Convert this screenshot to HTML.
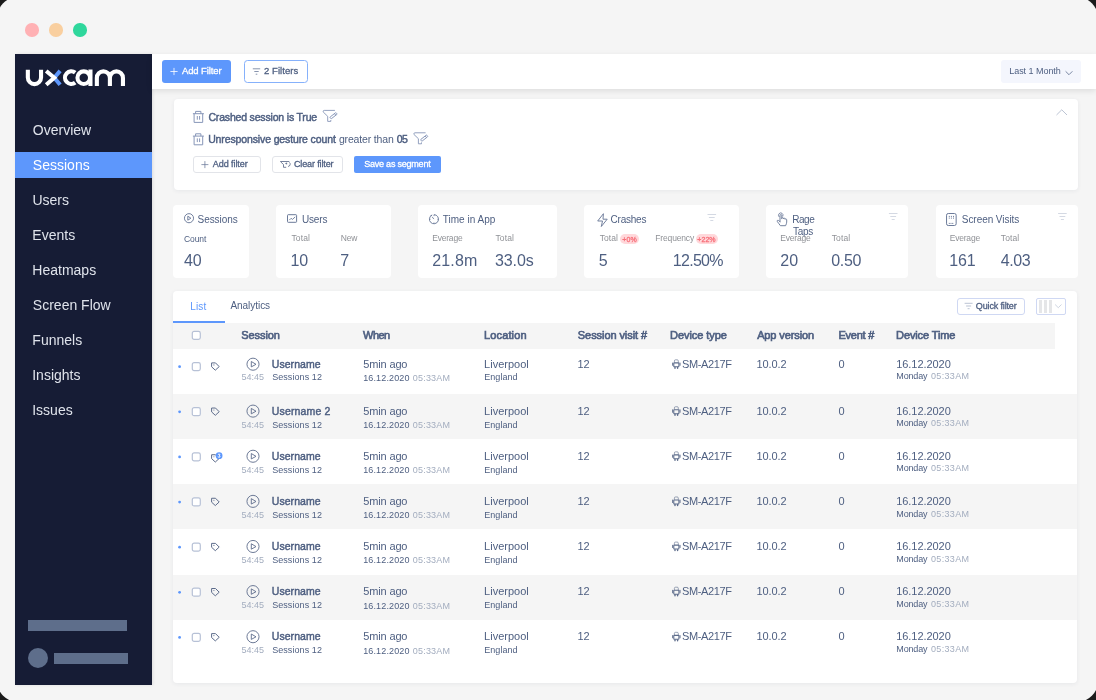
<!DOCTYPE html>
<html><head><meta charset="utf-8"><title>UXCam Sessions</title>
<style>
html,body{margin:0;padding:0;overflow:hidden}
.root{position:absolute;left:0;top:0;width:1096px;height:700px;overflow:hidden;background:#1b1b1b}
body{width:1096px;height:700px;overflow:hidden;background:#1b1b1b;font-family:"Liberation Sans",sans-serif;position:relative}
.win{position:absolute;left:-3px;top:-3px;width:1100.5px;height:704.6px;background:#f5f5f5;border-radius:21px}
.pg{position:absolute;left:0;top:0;width:1096px;height:700px}
.b{position:absolute;display:block}
.tl{position:absolute;left:0;top:0;width:1096px;height:700px;will-change:transform}
.t{position:absolute;white-space:nowrap;line-height:1}
</style></head><body>
<div class="root">
<div class="win"></div>
<div class="pg">
<div class="b" style="left:25.25px;top:23.25px;width:13.5px;height:13.5px;border-radius:50%;background:#ffb1b4"></div>
<div class="b" style="left:49.25px;top:23.25px;width:13.5px;height:13.5px;border-radius:50%;background:#f9cf9f"></div>
<div class="b" style="left:73.25px;top:23.25px;width:13.5px;height:13.5px;border-radius:50%;background:#2fd79c"></div>
<div class="b" style="left:15px;top:54px;width:137px;height:631px;background:#161c35;box-shadow:1px 0 3px rgba(0,0,0,.10)"></div>
<svg class="b" style="left:20px;top:60px;" width="116" height="36" viewBox="0 0 116 36" fill="none"><g transform="translate(-20.000 -60.000)">
<path d="M60.1 70.9L54.3 77.8L60.1 84.8" stroke="#5d97fc" stroke-width="4"/>
<g stroke="#fff" stroke-width="4.1" fill="none">
<path d="M27.85 69.7V77.5a6.6 6.6 0 0 0 13.2 0V69.7"/>
<path d="M46.2 70.9L54.3 77.8L46.2 84.8" stroke-width="4" stroke-linejoin="miter"/>
<path d="M75.2 72.7A6.3 6.3 0 1 0 75.2 82.6"/>
<circle cx="83.75" cy="77.65" r="6.3"/>
<path d="M90.45 69.5V86"/>
<path d="M96.85 86V77.9a6.525 6.525 0 0 1 13.05 0V86M109.9 77.9a6.525 6.525 0 0 1 13.05 0V86"/>
</g>
</g></svg>
<div class="b" style="left:15px;top:152px;width:137px;height:26px;background:#5d97fc"></div>
<div class="b" style="left:28px;top:620px;width:99px;height:10.5px;background:#5e6e8b"></div>
<div class="b" style="left:28px;top:648px;width:20px;height:20px;background:#5e6e8b;border-radius:50%"></div>
<div class="b" style="left:54px;top:652.5px;width:74px;height:11px;background:#5e6e8b"></div>
<div class="b" style="left:152px;top:54px;width:944px;height:35px;background:#fff;box-shadow:0 2px 6px rgba(0,0,0,.10)"></div>
<div class="b" style="left:162px;top:60px;width:69px;height:23px;background:#5d97fc;border-radius:3px"></div>
<svg class="b" style="left:170px;top:67px;" width="9" height="10" viewBox="0 0 9 10" fill="none"><g transform="translate(0.200 0.700)"><path d="M3.8 .2V7.4M.2 3.8H7.4" stroke="#fff" stroke-width=".8"/></g></svg>
<div class="b" style="left:244px;top:60px;width:64px;height:23px;background:#fff;border:1px solid #86b1fb;border-radius:3.5px;box-sizing:border-box"></div>
<svg class="b" style="left:252px;top:68px;" width="10" height="8" viewBox="0 0 10 8" fill="none"><g transform="translate(0.500 0.000)"><path d="M.3 .8H7.7M1.8 3.5H6.2M3.2 6.2H4.8" stroke="#6b7a99" stroke-width=".8"/></g></svg>
<div class="b" style="left:1001px;top:60px;width:80px;height:23px;background:#f4f6fd;border-radius:3px"></div>
<svg class="b" style="left:1065px;top:70px;" width="9" height="7" viewBox="0 0 9 7" fill="none"><g transform="translate(0.000 0.500)"><path d="M.6 .8L4 4.2L7.4 .8" stroke="#6b7a99" stroke-width=".9"/></g></svg>
<div class="b" style="left:174px;top:99px;width:904px;height:91px;background:#fff;border-radius:4px;box-shadow:0 1px 4px rgba(40,50,80,.07)"></div>
<svg class="b" style="left:192px;top:110px;" width="14" height="14" viewBox="0 0 14 14" fill="none"><g transform="translate(0.400 0.800)"><g stroke="#8796b8" stroke-width="1" fill="none"><path d="M.5 2.9H11.5M3.2 2.9V.6H8.5V2.9M1.7 2.9V11.6H10.3V2.9M4.9 5.2V8.9M7.2 5.2V8.9"/></g></g></svg>
<svg class="b" style="left:322px;top:109px;" width="17" height="15" viewBox="0 0 17 15" fill="none"><g transform="translate(0.000 0.000)"><g stroke="#8796b8" stroke-width=".9" fill="none"><path d="M12.9 1.4H2.2Q1.2 1.4 1.2 2.4V3L5.7 7.3V12.4H8.8V11"/><g transform="translate(11.5 6.7) rotate(-38)"><rect x="-3.9" y="-1.05" width="7.8" height="2.1" rx=".6"/><path d="M2.1 -1V1"/></g></g></g></svg>
<svg class="b" style="left:192px;top:133px;" width="14" height="14" viewBox="0 0 14 14" fill="none"><g transform="translate(0.400 0.200)"><g stroke="#8796b8" stroke-width="1" fill="none"><path d="M.5 2.9H11.5M3.2 2.9V.6H8.5V2.9M1.7 2.9V11.6H10.3V2.9M4.9 5.2V8.9M7.2 5.2V8.9"/></g></g></svg>
<svg class="b" style="left:412px;top:131px;" width="18" height="16" viewBox="0 0 18 16" fill="none"><g transform="translate(0.700 0.400)"><g stroke="#8796b8" stroke-width=".9" fill="none"><path d="M12.9 1.4H2.2Q1.2 1.4 1.2 2.4V3L5.7 7.3V12.4H8.8V11"/><g transform="translate(11.5 6.7) rotate(-38)"><rect x="-3.9" y="-1.05" width="7.8" height="2.1" rx=".6"/><path d="M2.1 -1V1"/></g></g></g></svg>
<div class="b" style="left:193px;top:156px;width:68px;height:17px;background:#fff;border:1px solid #e2e4e9;border-radius:3px;box-sizing:border-box"></div>
<svg class="b" style="left:201px;top:161px;" width="9" height="9" viewBox="0 0 9 9" fill="none"><g transform="translate(0.300 0.000)"><path d="M3.6 .1V7.1M.1 3.6H7.1" stroke="#6b7a99" stroke-width=".75"/></g></svg>
<div class="b" style="left:272px;top:156px;width:71px;height:17px;background:#fff;border:1px solid #e2e4e9;border-radius:3px;box-sizing:border-box"></div>
<svg class="b" style="left:280px;top:160px;" width="13" height="10" viewBox="0 0 13 10" fill="none"><g transform="translate(0.000 0.500)"><g stroke="#5d6c8b" stroke-width=".85" fill="none" stroke-linejoin="round"><path d="M.3 1H9.3M.6 1.3L3.5 4V6.8H6.2"/><path d="M8.1 6A2.35 2.35 0 0 0 9.4 1.9"/><path d="M6.9 2.2L5.3 3L6.9 3.8Z" fill="#5d6c8b" stroke-width=".4"/></g></g></svg>
<div class="b" style="left:354px;top:156px;width:87px;height:17px;background:#5d97fc;border-radius:2px"></div>
<svg class="b" style="left:1056px;top:109px;" width="13" height="8" viewBox="0 0 13 8" fill="none"><g transform="translate(0.000 0.000)"><path d="M.5 6L5.75 .8L11 6" stroke="#aab4c8" stroke-width=".8"/></g></svg>
<div class="b" style="left:173px;top:205px;width:76px;height:73px;background:#fff;border-radius:4px"></div>
<svg class="b" style="left:183px;top:213px;" width="13" height="12" viewBox="0 0 13 12" fill="none"><g transform="translate(0.900 0.100)"><g stroke="#6b7a99" stroke-width=".95"><circle cx="5.1" cy="5.1" r="4.55"/><path d="M3.9 3.1L7 5.1L3.9 7.1Z" stroke-linejoin="round"/></g></g></svg>
<div class="b" style="left:276px;top:205px;width:115px;height:73px;background:#fff;border-radius:4px"></div>
<svg class="b" style="left:287px;top:214px;" width="12" height="10" viewBox="0 0 12 10" fill="none"><g transform="translate(0.000 0.200)"><g stroke="#6b7a99" stroke-width="1"><rect x=".5" y=".5" width="9.1" height="7.6" rx=".7"/><path d="M2.3 5.9L4.1 4.1L5.5 5.2L8.2 2.7" stroke-width=".9"/></g></g></svg>
<div class="b" style="left:418px;top:205px;width:139px;height:73px;background:#fff;border-radius:4px"></div>
<svg class="b" style="left:428px;top:214px;" width="13" height="12" viewBox="0 0 13 12" fill="none"><g transform="translate(0.900 0.100)"><g stroke="#6b7a99" stroke-width=".95"><path d="M3.3 .9A4.55 4.55 0 1 0 5.1 .55"/><path d="M5.1 .6V2M5.1 8.4V9.6M.6 5.1H1.7M8.5 5.1H9.6M5 5L3.2 2.7" stroke-width=".85"/><path d="M1.6 1.6L3 1.1" stroke-width=".8"/></g></g></svg>
<div class="b" style="left:584px;top:205px;width:155px;height:73px;background:#fff;border-radius:4px"></div>
<svg class="b" style="left:597px;top:213px;" width="12" height="15" viewBox="0 0 12 15" fill="none"><g transform="translate(-597.000 -213.000)"><path d="M603.4 213.7L597.7 221H602.5L601.3 226.5L607.2 219.2H603Z" stroke="#6b7a99" stroke-width=".95" stroke-linejoin="round"/></g></svg>
<svg class="b" style="left:707px;top:214px;" width="11" height="8" viewBox="0 0 11 8" fill="none"><g transform="translate(0.500 0.000)"><path d="M0 .5H8.6M1.4 3.5H7.2M2.8 6.5H5.8" stroke="#c6ccd9" stroke-width=".75"/></g></svg>
<div class="b" style="left:620.3px;top:233.6px;width:18.6px;height:10px;background:#ffd8db;border-radius:5px"></div>
<div class="b" style="left:695.7px;top:233.6px;width:22.3px;height:10px;background:#ffd8db;border-radius:5px"></div>
<div class="b" style="left:766px;top:205px;width:142px;height:73px;background:#fff;border-radius:4px"></div>
<svg class="b" style="left:776px;top:212px;" width="13" height="16" viewBox="0 0 13 16" fill="none"><g transform="translate(0.000 0.500)"><g stroke="#6b7a99" stroke-width=".95" stroke-linejoin="round" stroke-linecap="round"><path d="M4 9.2V3a.9 .9 0 0 1 1.8 0V6.2M5.8 5.4c.5-.5 1.6-.3 1.7 .5M7.5 5.8c.6-.4 1.5-.2 1.6 .6M9.1 6.4c.7-.3 1.6 0 1.6 1V9.6c0 .9-.5 2.2-1.1 3.6H4.4C3.6 11.9 2 10.2 1.3 9c-.5-.9 .5-1.7 1.3-1L4 9.2"/><path d="M3 4.2A2.3 2.3 0 1 1 6.9 3.6" stroke-width=".85"/></g></g></svg>
<svg class="b" style="left:888px;top:213px;" width="11" height="8" viewBox="0 0 11 8" fill="none"><g transform="translate(0.900 0.000)"><path d="M0 .5H8.6M1.4 3.5H7.2M2.8 6.5H5.8" stroke="#c6ccd9" stroke-width=".75"/></g></svg>
<div class="b" style="left:936px;top:205px;width:142px;height:73px;background:#fff;border-radius:4px"></div>
<svg class="b" style="left:946px;top:213px;" width="12" height="14" viewBox="0 0 12 14" fill="none"><g transform="translate(0.000 0.000)"><g stroke="#6b7a99" stroke-width="1"><rect x=".55" y=".5" width="9.6" height="12" rx="1.7"/><path d="M3.3 2.9V5.6M5.4 2.9V5.6M7.5 2.9V5.6M2.8 10.4H8" stroke-width="1" stroke-dasharray="1 .7"/></g></g></svg>
<svg class="b" style="left:1058px;top:213px;" width="10" height="8" viewBox="0 0 10 8" fill="none"><g transform="translate(0.100 0.000)"><path d="M0 .5H8.6M1.4 3.5H7.2M2.8 6.5H5.8" stroke="#c6ccd9" stroke-width=".75"/></g></svg>
<div class="b" style="left:173px;top:291px;width:904px;height:392px;background:#fff;border-radius:4px;box-shadow:0 1px 4px rgba(40,50,80,.07)"></div>
<div class="b" style="left:173px;top:321px;width:51.7px;height:2px;background:#5d97fc"></div>
<div class="b" style="left:957px;top:298px;width:67.5px;height:16.5px;background:#fff;border:1px solid #cfd8f3;border-radius:3px;box-sizing:border-box"></div>
<svg class="b" style="left:964px;top:302px;" width="10" height="9" viewBox="0 0 10 9" fill="none"><g transform="translate(0.300 0.700)"><path d="M.3 .6H8.3M1.8 3.3H6.8M3.3 6H5.3" stroke="#aab4c8" stroke-width=".8"/></g></svg>
<div class="b" style="left:1036px;top:298px;width:30px;height:16.5px;background:#fff;border:1px solid #cfd8f3;border-radius:2px;box-sizing:border-box"></div>
<div class="b" style="left:1038.8px;top:299.6px;width:2.8px;height:13px;background:#e5e6e8"></div>
<div class="b" style="left:1043.8px;top:299.6px;width:2.8px;height:13px;background:#e5e6e8"></div>
<div class="b" style="left:1048.8px;top:299.6px;width:2.8px;height:13px;background:#e5e6e8"></div>
<svg class="b" style="left:1054px;top:304px;" width="9" height="6" viewBox="0 0 9 6" fill="none"><g transform="translate(0.600 0.000)"><path d="M.5 .5L3.7 3.7L6.9 .5" stroke="#c2cad9" stroke-width=".8"/></g></svg>
<div class="b" style="left:173px;top:323px;width:882px;height:26px;background:#f5f5f5"></div>
<svg class="b" style="left:191px;top:330px;" width="11" height="12" viewBox="0 0 11 12" fill="none"><g transform="translate(0.700 0.800)"><rect x=".6" y=".6" width="8" height="8" rx="1.8" fill="#fff" stroke="#b7c1d6" stroke-width="1.2"/></g></svg>
<svg class="b" style="left:177px;top:364px;" width="6" height="6" viewBox="0 0 6 6" fill="none"><g transform="translate(0.600 0.700)"><circle cx="2" cy="2" r="1.4" fill="#5d97fc"/></g></svg>
<svg class="b" style="left:191px;top:362px;" width="11" height="11" viewBox="0 0 11 11" fill="none"><g transform="translate(0.700 0.000)"><rect x=".6" y=".6" width="8" height="8" rx="1.8" fill="#fff" stroke="#b7c1d6" stroke-width="1.2"/></g></svg>
<svg class="b" style="left:210px;top:361px;" width="12" height="12" viewBox="0 0 12 12" fill="none"><g transform="translate(0.400 0.800)"><g stroke="#5d6c8b" stroke-width="1" stroke-linejoin="round"><path d="M1.2 1.1H5.1L8.8 4.8L4.9 8.4L1.2 5Z"/><circle cx="3.5" cy="3.1" r=".55" fill="#5d6c8b" stroke="none"/></g></g></svg>
<svg class="b" style="left:246px;top:357px;" width="15" height="16" viewBox="0 0 15 16" fill="none"><g transform="translate(0.000 0.200)"><g stroke="#5d6c8b" stroke-width=".9" stroke-linejoin="round"><circle cx="7" cy="7" r="6.05"/><path d="M5.3 4.3L10 7.1L5.3 9.7Z"/></g></g></svg>
<svg class="b" style="left:671px;top:359px;" width="12" height="12" viewBox="0 0 12 12" fill="none"><g transform="translate(0.700 0.000)"><g stroke="#5d6c8b" fill="none" stroke-linecap="round"><rect x="2.1" y="3.85" width="5.1" height="3.9" rx=".5" stroke-width="1.05"/><path d="M2.7 3.2V1.9Q2.7 .8 3.8 .8H5.5Q6.6 .8 6.6 1.9V3.2" stroke-width=".85" opacity=".7"/><path d="M1 3.9V6.3M8.3 3.9V6.3" stroke-width="1.05"/><path d="M3.3 8.4V9.3M5.9 8.4V9.3" stroke-width="1.4"/></g></g></svg>
<div class="b" style="left:173px;top:394px;width:904px;height:45px;background:#f5f5f5"></div>
<svg class="b" style="left:177px;top:409px;" width="6" height="6" viewBox="0 0 6 6" fill="none"><g transform="translate(0.600 0.820)"><circle cx="2" cy="2" r="1.4" fill="#5d97fc"/></g></svg>
<svg class="b" style="left:191px;top:407px;" width="11" height="11" viewBox="0 0 11 11" fill="none"><g transform="translate(0.700 0.120)"><rect x=".6" y=".6" width="8" height="8" rx="1.8" fill="#fff" stroke="#b7c1d6" stroke-width="1.2"/></g></svg>
<svg class="b" style="left:210px;top:406px;" width="12" height="12" viewBox="0 0 12 12" fill="none"><g transform="translate(0.400 0.920)"><g stroke="#5d6c8b" stroke-width="1" stroke-linejoin="round"><path d="M1.2 1.1H5.1L8.8 4.8L4.9 8.4L1.2 5Z"/><circle cx="3.5" cy="3.1" r=".55" fill="#5d6c8b" stroke="none"/></g></g></svg>
<svg class="b" style="left:246px;top:404px;" width="15" height="16" viewBox="0 0 15 16" fill="none"><g transform="translate(0.000 0.120)"><g stroke="#5d6c8b" stroke-width=".9" stroke-linejoin="round"><circle cx="7" cy="7" r="6.05"/><path d="M5.3 4.3L10 7.1L5.3 9.7Z"/></g></g></svg>
<svg class="b" style="left:671px;top:405px;" width="12" height="13" viewBox="0 0 12 13" fill="none"><g transform="translate(0.700 0.920)"><g stroke="#5d6c8b" fill="none" stroke-linecap="round"><rect x="2.1" y="3.85" width="5.1" height="3.9" rx=".5" stroke-width="1.05"/><path d="M2.7 3.2V1.9Q2.7 .8 3.8 .8H5.5Q6.6 .8 6.6 1.9V3.2" stroke-width=".85" opacity=".7"/><path d="M1 3.9V6.3M8.3 3.9V6.3" stroke-width="1.05"/><path d="M3.3 8.4V9.3M5.9 8.4V9.3" stroke-width="1.4"/></g></g></svg>
<svg class="b" style="left:177px;top:454px;" width="6" height="6" viewBox="0 0 6 6" fill="none"><g transform="translate(0.600 0.940)"><circle cx="2" cy="2" r="1.4" fill="#5d97fc"/></g></svg>
<svg class="b" style="left:191px;top:452px;" width="11" height="11" viewBox="0 0 11 11" fill="none"><g transform="translate(0.700 0.240)"><rect x=".6" y=".6" width="8" height="8" rx="1.8" fill="#fff" stroke="#b7c1d6" stroke-width="1.2"/></g></svg>
<svg class="b" style="left:210px;top:453px;" width="12" height="12" viewBox="0 0 12 12" fill="none"><g transform="translate(0.400 0.640)"><g stroke="#5d6c8b" stroke-width="1" stroke-linejoin="round"><path d="M1.2 1.1H5.1L8.8 4.8L4.9 8.4L1.2 5Z"/><circle cx="3.5" cy="3.1" r=".55" fill="#5d6c8b" stroke="none"/></g></g></svg>
<svg class="b" style="left:215px;top:451px;" width="10" height="10" viewBox="0 0 10 10" fill="none"><g transform="translate(0.100 0.640)"><circle cx="4" cy="4" r="3.4" fill="#5d97fc"/><path d="M3.1 2.7Q4 1.9 4.8 2.7Q5.2 3.6 4 3.95Q5.4 4.3 4.9 5.3Q4 6.1 3 5.3" stroke="#fff" stroke-width=".9" fill="none" stroke-linecap="round"/></g></svg>
<svg class="b" style="left:246px;top:449px;" width="15" height="16" viewBox="0 0 15 16" fill="none"><g transform="translate(0.000 0.240)"><g stroke="#5d6c8b" stroke-width=".9" stroke-linejoin="round"><circle cx="7" cy="7" r="6.05"/><path d="M5.3 4.3L10 7.1L5.3 9.7Z"/></g></g></svg>
<svg class="b" style="left:671px;top:451px;" width="12" height="12" viewBox="0 0 12 12" fill="none"><g transform="translate(0.700 0.040)"><g stroke="#5d6c8b" fill="none" stroke-linecap="round"><rect x="2.1" y="3.85" width="5.1" height="3.9" rx=".5" stroke-width="1.05"/><path d="M2.7 3.2V1.9Q2.7 .8 3.8 .8H5.5Q6.6 .8 6.6 1.9V3.2" stroke-width=".85" opacity=".7"/><path d="M1 3.9V6.3M8.3 3.9V6.3" stroke-width="1.05"/><path d="M3.3 8.4V9.3M5.9 8.4V9.3" stroke-width="1.4"/></g></g></svg>
<div class="b" style="left:173px;top:484px;width:904px;height:45px;background:#f5f5f5"></div>
<svg class="b" style="left:177px;top:500px;" width="6" height="6" viewBox="0 0 6 6" fill="none"><g transform="translate(0.600 0.060)"><circle cx="2" cy="2" r="1.4" fill="#5d97fc"/></g></svg>
<svg class="b" style="left:191px;top:497px;" width="11" height="11" viewBox="0 0 11 11" fill="none"><g transform="translate(0.700 0.360)"><rect x=".6" y=".6" width="8" height="8" rx="1.8" fill="#fff" stroke="#b7c1d6" stroke-width="1.2"/></g></svg>
<svg class="b" style="left:210px;top:497px;" width="12" height="11" viewBox="0 0 12 11" fill="none"><g transform="translate(0.400 0.160)"><g stroke="#5d6c8b" stroke-width="1" stroke-linejoin="round"><path d="M1.2 1.1H5.1L8.8 4.8L4.9 8.4L1.2 5Z"/><circle cx="3.5" cy="3.1" r=".55" fill="#5d6c8b" stroke="none"/></g></g></svg>
<svg class="b" style="left:246px;top:494px;" width="15" height="16" viewBox="0 0 15 16" fill="none"><g transform="translate(0.000 0.360)"><g stroke="#5d6c8b" stroke-width=".9" stroke-linejoin="round"><circle cx="7" cy="7" r="6.05"/><path d="M5.3 4.3L10 7.1L5.3 9.7Z"/></g></g></svg>
<svg class="b" style="left:671px;top:496px;" width="12" height="12" viewBox="0 0 12 12" fill="none"><g transform="translate(0.700 0.160)"><g stroke="#5d6c8b" fill="none" stroke-linecap="round"><rect x="2.1" y="3.85" width="5.1" height="3.9" rx=".5" stroke-width="1.05"/><path d="M2.7 3.2V1.9Q2.7 .8 3.8 .8H5.5Q6.6 .8 6.6 1.9V3.2" stroke-width=".85" opacity=".7"/><path d="M1 3.9V6.3M8.3 3.9V6.3" stroke-width="1.05"/><path d="M3.3 8.4V9.3M5.9 8.4V9.3" stroke-width="1.4"/></g></g></svg>
<svg class="b" style="left:177px;top:545px;" width="6" height="6" viewBox="0 0 6 6" fill="none"><g transform="translate(0.600 0.180)"><circle cx="2" cy="2" r="1.4" fill="#5d97fc"/></g></svg>
<svg class="b" style="left:191px;top:542px;" width="11" height="11" viewBox="0 0 11 11" fill="none"><g transform="translate(0.700 0.480)"><rect x=".6" y=".6" width="8" height="8" rx="1.8" fill="#fff" stroke="#b7c1d6" stroke-width="1.2"/></g></svg>
<svg class="b" style="left:210px;top:542px;" width="12" height="11" viewBox="0 0 12 11" fill="none"><g transform="translate(0.400 0.280)"><g stroke="#5d6c8b" stroke-width="1" stroke-linejoin="round"><path d="M1.2 1.1H5.1L8.8 4.8L4.9 8.4L1.2 5Z"/><circle cx="3.5" cy="3.1" r=".55" fill="#5d6c8b" stroke="none"/></g></g></svg>
<svg class="b" style="left:246px;top:539px;" width="15" height="16" viewBox="0 0 15 16" fill="none"><g transform="translate(0.000 0.480)"><g stroke="#5d6c8b" stroke-width=".9" stroke-linejoin="round"><circle cx="7" cy="7" r="6.05"/><path d="M5.3 4.3L10 7.1L5.3 9.7Z"/></g></g></svg>
<svg class="b" style="left:671px;top:541px;" width="12" height="12" viewBox="0 0 12 12" fill="none"><g transform="translate(0.700 0.280)"><g stroke="#5d6c8b" fill="none" stroke-linecap="round"><rect x="2.1" y="3.85" width="5.1" height="3.9" rx=".5" stroke-width="1.05"/><path d="M2.7 3.2V1.9Q2.7 .8 3.8 .8H5.5Q6.6 .8 6.6 1.9V3.2" stroke-width=".85" opacity=".7"/><path d="M1 3.9V6.3M8.3 3.9V6.3" stroke-width="1.05"/><path d="M3.3 8.4V9.3M5.9 8.4V9.3" stroke-width="1.4"/></g></g></svg>
<div class="b" style="left:173px;top:575px;width:904px;height:45px;background:#f5f5f5"></div>
<svg class="b" style="left:177px;top:590px;" width="6" height="6" viewBox="0 0 6 6" fill="none"><g transform="translate(0.600 0.300)"><circle cx="2" cy="2" r="1.4" fill="#5d97fc"/></g></svg>
<svg class="b" style="left:191px;top:587px;" width="11" height="11" viewBox="0 0 11 11" fill="none"><g transform="translate(0.700 0.600)"><rect x=".6" y=".6" width="8" height="8" rx="1.8" fill="#fff" stroke="#b7c1d6" stroke-width="1.2"/></g></svg>
<svg class="b" style="left:210px;top:587px;" width="12" height="11" viewBox="0 0 12 11" fill="none"><g transform="translate(0.400 0.400)"><g stroke="#5d6c8b" stroke-width="1" stroke-linejoin="round"><path d="M1.2 1.1H5.1L8.8 4.8L4.9 8.4L1.2 5Z"/><circle cx="3.5" cy="3.1" r=".55" fill="#5d6c8b" stroke="none"/></g></g></svg>
<svg class="b" style="left:246px;top:584px;" width="15" height="16" viewBox="0 0 15 16" fill="none"><g transform="translate(0.000 0.600)"><g stroke="#5d6c8b" stroke-width=".9" stroke-linejoin="round"><circle cx="7" cy="7" r="6.05"/><path d="M5.3 4.3L10 7.1L5.3 9.7Z"/></g></g></svg>
<svg class="b" style="left:671px;top:586px;" width="12" height="12" viewBox="0 0 12 12" fill="none"><g transform="translate(0.700 0.400)"><g stroke="#5d6c8b" fill="none" stroke-linecap="round"><rect x="2.1" y="3.85" width="5.1" height="3.9" rx=".5" stroke-width="1.05"/><path d="M2.7 3.2V1.9Q2.7 .8 3.8 .8H5.5Q6.6 .8 6.6 1.9V3.2" stroke-width=".85" opacity=".7"/><path d="M1 3.9V6.3M8.3 3.9V6.3" stroke-width="1.05"/><path d="M3.3 8.4V9.3M5.9 8.4V9.3" stroke-width="1.4"/></g></g></svg>
<svg class="b" style="left:177px;top:635px;" width="6" height="6" viewBox="0 0 6 6" fill="none"><g transform="translate(0.600 0.420)"><circle cx="2" cy="2" r="1.4" fill="#5d97fc"/></g></svg>
<svg class="b" style="left:191px;top:632px;" width="11" height="11" viewBox="0 0 11 11" fill="none"><g transform="translate(0.700 0.720)"><rect x=".6" y=".6" width="8" height="8" rx="1.8" fill="#fff" stroke="#b7c1d6" stroke-width="1.2"/></g></svg>
<svg class="b" style="left:210px;top:632px;" width="12" height="12" viewBox="0 0 12 12" fill="none"><g transform="translate(0.400 0.520)"><g stroke="#5d6c8b" stroke-width="1" stroke-linejoin="round"><path d="M1.2 1.1H5.1L8.8 4.8L4.9 8.4L1.2 5Z"/><circle cx="3.5" cy="3.1" r=".55" fill="#5d6c8b" stroke="none"/></g></g></svg>
<svg class="b" style="left:246px;top:629px;" width="15" height="16" viewBox="0 0 15 16" fill="none"><g transform="translate(0.000 0.720)"><g stroke="#5d6c8b" stroke-width=".9" stroke-linejoin="round"><circle cx="7" cy="7" r="6.05"/><path d="M5.3 4.3L10 7.1L5.3 9.7Z"/></g></g></svg>
<svg class="b" style="left:671px;top:631px;" width="12" height="12" viewBox="0 0 12 12" fill="none"><g transform="translate(0.700 0.520)"><g stroke="#5d6c8b" fill="none" stroke-linecap="round"><rect x="2.1" y="3.85" width="5.1" height="3.9" rx=".5" stroke-width="1.05"/><path d="M2.7 3.2V1.9Q2.7 .8 3.8 .8H5.5Q6.6 .8 6.6 1.9V3.2" stroke-width=".85" opacity=".7"/><path d="M1 3.9V6.3M8.3 3.9V6.3" stroke-width="1.05"/><path d="M3.3 8.4V9.3M5.9 8.4V9.3" stroke-width="1.4"/></g></g></svg>
<div class="tl">
<span class="t" style="left:32.84px;top:123.00px;font-size:14px;font-weight:400;color:#dfe3eb;">Overview</span>
<span class="t" style="left:32.87px;top:158.00px;font-size:14px;font-weight:400;color:#ffffff;">Sessions</span>
<span class="t" style="left:32.42px;top:193.00px;font-size:14px;font-weight:400;color:#dfe3eb;">Users</span>
<span class="t" style="left:32.35px;top:228.00px;font-size:14px;font-weight:400;color:#dfe3eb;">Events</span>
<span class="t" style="left:32.35px;top:263.00px;font-size:14px;font-weight:400;color:#dfe3eb;">Heatmaps</span>
<span class="t" style="left:32.87px;top:298.00px;font-size:14px;font-weight:400;color:#dfe3eb;">Screen Flow</span>
<span class="t" style="left:32.35px;top:333.00px;font-size:14px;font-weight:400;color:#dfe3eb;">Funnels</span>
<span class="t" style="left:32.21px;top:368.00px;font-size:14px;font-weight:400;color:#dfe3eb;">Insights</span>
<span class="t" style="left:32.21px;top:403.00px;font-size:14px;font-weight:400;color:#dfe3eb;">Issues</span>
<span class="t" style="left:181.93px;top:65.75px;font-size:9.5px;font-weight:400;color:#fff;letter-spacing:-0.098px;-webkit-text-stroke:0.3px #fff;">Add Filter</span>
<span class="t" style="left:264.07px;top:65.75px;font-size:9.5px;font-weight:400;color:#4e5f81;letter-spacing:0.042px;-webkit-text-stroke:0.3px #4e5f81;">2 Filters</span>
<span class="t" style="left:1009.21px;top:66.50px;font-size:9px;font-weight:400;color:#4e5f81;letter-spacing:-0.038px;">Last 1 Month</span>
<span class="t" style="left:208.42px;top:111.75px;font-size:10.5px;font-weight:400;color:#4e5f81;letter-spacing:-0.175px;-webkit-text-stroke:0.45px #4e5f81;">Crashed session is True</span>
<span class="t" style="left:208.14px;top:133.75px;font-size:10.5px;font-weight:400;color:#4e5f81;letter-spacing:-0.123px;-webkit-text-stroke:0.45px #4e5f81;">Unresponsive gesture count</span>
<span class="t" style="left:338.91px;top:133.75px;font-size:10.5px;font-weight:400;color:#4e5f81;letter-spacing:-0.164px;">greater than</span>
<span class="t" style="left:396.64px;top:133.75px;font-size:10.5px;font-weight:400;color:#4e5f81;letter-spacing:-0.536px;-webkit-text-stroke:0.45px #4e5f81;">05</span>
<span class="t" style="left:212.83px;top:159.50px;font-size:9px;font-weight:400;color:#4e5f81;letter-spacing:-0.072px;-webkit-text-stroke:0.3px #4e5f81;">Add filter</span>
<span class="t" style="left:294.00px;top:159.50px;font-size:9px;font-weight:400;color:#4e5f81;letter-spacing:-0.138px;-webkit-text-stroke:0.3px #4e5f81;">Clear filter</span>
<span class="t" style="left:364.15px;top:159.50px;font-size:9px;font-weight:400;color:#fff;letter-spacing:-0.213px;-webkit-text-stroke:0.3px #fff;">Save as segment</span>
<span class="t" style="left:197.60px;top:214.50px;font-size:10px;font-weight:400;color:#4e5f81;letter-spacing:-0.067px;">Sessions</span>
<span class="t" style="left:183.92px;top:234.75px;font-size:8.5px;font-weight:400;color:#4e5f81;letter-spacing:-0.051px;">Count</span>
<span class="t" style="left:184.00px;top:252.50px;font-size:16px;font-weight:400;color:#4e5f81;letter-spacing:-0.032px;">40</span>
<span class="t" style="left:301.98px;top:214.50px;font-size:10px;font-weight:400;color:#4e5f81;letter-spacing:-0.170px;">Users</span>
<span class="t" style="left:291.46px;top:233.75px;font-size:8.5px;font-weight:400;color:#8f9196;letter-spacing:0.149px;">Total</span>
<span class="t" style="left:340.65px;top:233.75px;font-size:8.5px;font-weight:400;color:#8f9196;letter-spacing:-0.114px;">New</span>
<span class="t" style="left:290.43px;top:252.50px;font-size:16px;font-weight:400;color:#4e5f81;letter-spacing:-0.068px;">10</span>
<span class="t" style="left:340.18px;top:252.50px;font-size:16px;font-weight:400;color:#4e5f81;">7</span>
<span class="t" style="left:442.73px;top:214.50px;font-size:10px;font-weight:400;color:#4e5f81;letter-spacing:0.020px;">Time in App</span>
<span class="t" style="left:432.25px;top:233.75px;font-size:8.5px;font-weight:400;color:#8f9196;letter-spacing:-0.214px;">Everage</span>
<span class="t" style="left:495.46px;top:233.75px;font-size:8.5px;font-weight:400;color:#8f9196;letter-spacing:0.149px;">Total</span>
<span class="t" style="left:432.15px;top:252.50px;font-size:16px;font-weight:400;color:#4e5f81;letter-spacing:0.169px;">21.8m</span>
<span class="t" style="left:495.04px;top:252.50px;font-size:16px;font-weight:400;color:#4e5f81;letter-spacing:-0.113px;">33.0s</span>
<span class="t" style="left:610.55px;top:214.50px;font-size:10px;font-weight:400;color:#4e5f81;letter-spacing:-0.230px;">Crashes</span>
<span class="t" style="left:599.66px;top:233.75px;font-size:8.5px;font-weight:400;color:#8f9196;letter-spacing:0.099px;">Total</span>
<span class="t" style="left:622.21px;top:236.00px;font-size:7px;font-weight:400;color:#f76f79;letter-spacing:0.139px;-webkit-text-stroke:0.3px #f76f79;">+0%</span>
<span class="t" style="left:655.35px;top:233.75px;font-size:8.5px;font-weight:400;color:#8f9196;letter-spacing:-0.169px;">Frequency</span>
<span class="t" style="left:697.31px;top:236.00px;font-size:7px;font-weight:400;color:#f76f79;letter-spacing:0.062px;-webkit-text-stroke:0.3px #f76f79;">+22%</span>
<span class="t" style="left:598.86px;top:252.50px;font-size:16px;font-weight:400;color:#4e5f81;">5</span>
<span class="t" style="left:672.83px;top:252.50px;font-size:16px;font-weight:400;color:#4e5f81;letter-spacing:-0.716px;">12.50%</span>
<span class="t" style="left:792.33px;top:214.50px;font-size:10px;font-weight:400;color:#4e5f81;letter-spacing:-0.513px;">Rage</span>
<span class="t" style="left:792.93px;top:226.50px;font-size:10px;font-weight:400;color:#4e5f81;letter-spacing:-0.247px;">Taps</span>
<span class="t" style="left:780.35px;top:233.75px;font-size:8.5px;font-weight:400;color:#8f9196;letter-spacing:-0.214px;">Everage</span>
<span class="t" style="left:831.76px;top:233.75px;font-size:8.5px;font-weight:400;color:#8f9196;letter-spacing:0.099px;">Total</span>
<span class="t" style="left:780.25px;top:252.50px;font-size:16px;font-weight:400;color:#4e5f81;letter-spacing:0.016px;">20</span>
<span class="t" style="left:831.33px;top:252.50px;font-size:16px;font-weight:400;color:#4e5f81;letter-spacing:-0.368px;">0.50</span>
<span class="t" style="left:961.80px;top:214.50px;font-size:10px;font-weight:400;color:#4e5f81;letter-spacing:-0.055px;">Screen Visits</span>
<span class="t" style="left:949.75px;top:233.75px;font-size:8.5px;font-weight:400;color:#8f9196;letter-spacing:-0.214px;">Everage</span>
<span class="t" style="left:1000.86px;top:233.75px;font-size:8.5px;font-weight:400;color:#8f9196;letter-spacing:0.099px;">Total</span>
<span class="t" style="left:949.23px;top:252.50px;font-size:16px;font-weight:400;color:#4e5f81;letter-spacing:-0.102px;">161</span>
<span class="t" style="left:1000.70px;top:252.50px;font-size:16px;font-weight:400;color:#4e5f81;letter-spacing:-0.432px;">4.03</span>
<span class="t" style="left:190.23px;top:301.50px;font-size:10px;font-weight:400;color:#5d97fc;letter-spacing:0.177px;">List</span>
<span class="t" style="left:230.43px;top:300.50px;font-size:10px;font-weight:400;color:#4e5f81;letter-spacing:-0.041px;">Analytics</span>
<span class="t" style="left:975.83px;top:301.50px;font-size:9px;font-weight:400;color:#4e5f81;letter-spacing:-0.149px;-webkit-text-stroke:0.3px #4e5f81;">Quick filter</span>
<span class="t" style="left:241.35px;top:329.50px;font-size:11px;font-weight:400;color:#4e5f81;letter-spacing:-0.088px;-webkit-text-stroke:0.65px #4e5f81;">Session</span>
<span class="t" style="left:363.11px;top:329.50px;font-size:11px;font-weight:400;color:#4e5f81;letter-spacing:-0.561px;-webkit-text-stroke:0.65px #4e5f81;">When</span>
<span class="t" style="left:484.05px;top:329.50px;font-size:11px;font-weight:400;color:#4e5f81;letter-spacing:0.131px;-webkit-text-stroke:0.65px #4e5f81;">Location</span>
<span class="t" style="left:577.86px;top:329.50px;font-size:11px;font-weight:400;color:#4e5f81;letter-spacing:-0.076px;-webkit-text-stroke:0.65px #4e5f81;">Session visit #</span>
<span class="t" style="left:670.05px;top:329.50px;font-size:11px;font-weight:400;color:#4e5f81;letter-spacing:-0.058px;-webkit-text-stroke:0.65px #4e5f81;">Device type</span>
<span class="t" style="left:757.13px;top:329.50px;font-size:11px;font-weight:400;color:#4e5f81;letter-spacing:-0.107px;-webkit-text-stroke:0.65px #4e5f81;">App version</span>
<span class="t" style="left:838.45px;top:329.50px;font-size:11px;font-weight:400;color:#4e5f81;letter-spacing:-0.226px;-webkit-text-stroke:0.65px #4e5f81;">Event #</span>
<span class="t" style="left:896.05px;top:329.50px;font-size:11px;font-weight:400;color:#4e5f81;letter-spacing:-0.113px;-webkit-text-stroke:0.65px #4e5f81;">Device Time</span>
<span class="t" style="left:241.49px;top:372.50px;font-size:9px;font-weight:400;color:#a3adbf;letter-spacing:0.003px;">54:45</span>
<span class="t" style="left:271.74px;top:358.75px;font-size:10.5px;font-weight:400;color:#4e5f81;letter-spacing:0.062px;-webkit-text-stroke:0.45px #4e5f81;">Username</span>
<span class="t" style="left:272.15px;top:372.50px;font-size:9px;font-weight:400;color:#4e5f81;letter-spacing:0.072px;">Sessions 12</span>
<span class="t" style="left:363.31px;top:358.50px;font-size:11px;font-weight:400;color:#4e5f81;letter-spacing:-0.152px;">5min ago</span>
<span class="t" style="left:363.17px;top:373.50px;font-size:9px;font-weight:400;color:#4e5f81;letter-spacing:0.142px;">16.12.2020</span>
<span class="t" style="left:412.70px;top:373.50px;font-size:9px;font-weight:400;color:#a3adbf;letter-spacing:0.228px;">05:33AM</span>
<span class="t" style="left:484.05px;top:358.50px;font-size:11px;font-weight:400;color:#4e5f81;letter-spacing:0.011px;">Liverpool</span>
<span class="t" style="left:484.21px;top:372.50px;font-size:9px;font-weight:400;color:#4e5f81;letter-spacing:0.064px;">England</span>
<span class="t" style="left:577.51px;top:358.50px;font-size:11px;font-weight:400;color:#4e5f81;letter-spacing:-0.146px;">12</span>
<span class="t" style="left:682.06px;top:358.50px;font-size:11px;font-weight:400;color:#4e5f81;letter-spacing:-0.392px;">SM-A217F</span>
<span class="t" style="left:756.61px;top:358.50px;font-size:11px;font-weight:400;color:#4e5f81;letter-spacing:-0.139px;">10.0.2</span>
<span class="t" style="left:838.57px;top:358.50px;font-size:11px;font-weight:400;color:#4e5f81;">0</span>
<span class="t" style="left:896.21px;top:358.50px;font-size:11px;font-weight:400;color:#4e5f81;letter-spacing:-0.056px;">16.12.2020</span>
<span class="t" style="left:896.31px;top:371.50px;font-size:9px;font-weight:400;color:#4e5f81;letter-spacing:-0.153px;">Monday</span>
<span class="t" style="left:931.00px;top:371.50px;font-size:9px;font-weight:400;color:#a3adbf;letter-spacing:0.328px;">05:33AM</span>
<span class="t" style="left:241.49px;top:420.50px;font-size:9px;font-weight:400;color:#a3adbf;letter-spacing:0.003px;">54:45</span>
<span class="t" style="left:271.74px;top:405.75px;font-size:10.5px;font-weight:400;color:#4e5f81;letter-spacing:0.160px;-webkit-text-stroke:0.45px #4e5f81;">Username 2</span>
<span class="t" style="left:272.15px;top:420.50px;font-size:9px;font-weight:400;color:#4e5f81;letter-spacing:0.072px;">Sessions 12</span>
<span class="t" style="left:363.31px;top:405.50px;font-size:11px;font-weight:400;color:#4e5f81;letter-spacing:-0.152px;">5min ago</span>
<span class="t" style="left:363.17px;top:420.50px;font-size:9px;font-weight:400;color:#4e5f81;letter-spacing:0.142px;">16.12.2020</span>
<span class="t" style="left:412.70px;top:420.50px;font-size:9px;font-weight:400;color:#a3adbf;letter-spacing:0.228px;">05:33AM</span>
<span class="t" style="left:484.05px;top:405.50px;font-size:11px;font-weight:400;color:#4e5f81;letter-spacing:0.011px;">Liverpool</span>
<span class="t" style="left:484.21px;top:420.50px;font-size:9px;font-weight:400;color:#4e5f81;letter-spacing:0.064px;">England</span>
<span class="t" style="left:577.51px;top:405.50px;font-size:11px;font-weight:400;color:#4e5f81;letter-spacing:-0.146px;">12</span>
<span class="t" style="left:682.06px;top:405.50px;font-size:11px;font-weight:400;color:#4e5f81;letter-spacing:-0.392px;">SM-A217F</span>
<span class="t" style="left:756.61px;top:405.50px;font-size:11px;font-weight:400;color:#4e5f81;letter-spacing:-0.139px;">10.0.2</span>
<span class="t" style="left:838.57px;top:405.50px;font-size:11px;font-weight:400;color:#4e5f81;">0</span>
<span class="t" style="left:896.21px;top:405.50px;font-size:11px;font-weight:400;color:#4e5f81;letter-spacing:-0.056px;">16.12.2020</span>
<span class="t" style="left:896.31px;top:418.50px;font-size:9px;font-weight:400;color:#4e5f81;letter-spacing:-0.153px;">Monday</span>
<span class="t" style="left:931.00px;top:418.50px;font-size:9px;font-weight:400;color:#a3adbf;letter-spacing:0.328px;">05:33AM</span>
<span class="t" style="left:241.49px;top:465.50px;font-size:9px;font-weight:400;color:#a3adbf;letter-spacing:0.003px;">54:45</span>
<span class="t" style="left:271.74px;top:450.75px;font-size:10.5px;font-weight:400;color:#4e5f81;letter-spacing:0.062px;-webkit-text-stroke:0.45px #4e5f81;">Username</span>
<span class="t" style="left:272.15px;top:465.50px;font-size:9px;font-weight:400;color:#4e5f81;letter-spacing:0.072px;">Sessions 12</span>
<span class="t" style="left:363.31px;top:450.50px;font-size:11px;font-weight:400;color:#4e5f81;letter-spacing:-0.152px;">5min ago</span>
<span class="t" style="left:363.17px;top:465.50px;font-size:9px;font-weight:400;color:#4e5f81;letter-spacing:0.142px;">16.12.2020</span>
<span class="t" style="left:412.70px;top:465.50px;font-size:9px;font-weight:400;color:#a3adbf;letter-spacing:0.228px;">05:33AM</span>
<span class="t" style="left:484.05px;top:450.50px;font-size:11px;font-weight:400;color:#4e5f81;letter-spacing:0.011px;">Liverpool</span>
<span class="t" style="left:484.21px;top:465.50px;font-size:9px;font-weight:400;color:#4e5f81;letter-spacing:0.064px;">England</span>
<span class="t" style="left:577.51px;top:450.50px;font-size:11px;font-weight:400;color:#4e5f81;letter-spacing:-0.146px;">12</span>
<span class="t" style="left:682.06px;top:450.50px;font-size:11px;font-weight:400;color:#4e5f81;letter-spacing:-0.392px;">SM-A217F</span>
<span class="t" style="left:756.61px;top:450.50px;font-size:11px;font-weight:400;color:#4e5f81;letter-spacing:-0.139px;">10.0.2</span>
<span class="t" style="left:838.57px;top:450.50px;font-size:11px;font-weight:400;color:#4e5f81;">0</span>
<span class="t" style="left:896.21px;top:450.50px;font-size:11px;font-weight:400;color:#4e5f81;letter-spacing:-0.056px;">16.12.2020</span>
<span class="t" style="left:896.31px;top:463.50px;font-size:9px;font-weight:400;color:#4e5f81;letter-spacing:-0.153px;">Monday</span>
<span class="t" style="left:931.00px;top:463.50px;font-size:9px;font-weight:400;color:#a3adbf;letter-spacing:0.328px;">05:33AM</span>
<span class="t" style="left:241.49px;top:510.50px;font-size:9px;font-weight:400;color:#a3adbf;letter-spacing:0.003px;">54:45</span>
<span class="t" style="left:271.74px;top:495.75px;font-size:10.5px;font-weight:400;color:#4e5f81;letter-spacing:0.062px;-webkit-text-stroke:0.45px #4e5f81;">Username</span>
<span class="t" style="left:272.15px;top:510.50px;font-size:9px;font-weight:400;color:#4e5f81;letter-spacing:0.072px;">Sessions 12</span>
<span class="t" style="left:363.31px;top:495.50px;font-size:11px;font-weight:400;color:#4e5f81;letter-spacing:-0.152px;">5min ago</span>
<span class="t" style="left:363.17px;top:510.50px;font-size:9px;font-weight:400;color:#4e5f81;letter-spacing:0.142px;">16.12.2020</span>
<span class="t" style="left:412.70px;top:510.50px;font-size:9px;font-weight:400;color:#a3adbf;letter-spacing:0.228px;">05:33AM</span>
<span class="t" style="left:484.05px;top:495.50px;font-size:11px;font-weight:400;color:#4e5f81;letter-spacing:0.011px;">Liverpool</span>
<span class="t" style="left:484.21px;top:510.50px;font-size:9px;font-weight:400;color:#4e5f81;letter-spacing:0.064px;">England</span>
<span class="t" style="left:577.51px;top:495.50px;font-size:11px;font-weight:400;color:#4e5f81;letter-spacing:-0.146px;">12</span>
<span class="t" style="left:682.06px;top:495.50px;font-size:11px;font-weight:400;color:#4e5f81;letter-spacing:-0.392px;">SM-A217F</span>
<span class="t" style="left:756.61px;top:495.50px;font-size:11px;font-weight:400;color:#4e5f81;letter-spacing:-0.139px;">10.0.2</span>
<span class="t" style="left:838.57px;top:495.50px;font-size:11px;font-weight:400;color:#4e5f81;">0</span>
<span class="t" style="left:896.21px;top:495.50px;font-size:11px;font-weight:400;color:#4e5f81;letter-spacing:-0.056px;">16.12.2020</span>
<span class="t" style="left:896.31px;top:509.50px;font-size:9px;font-weight:400;color:#4e5f81;letter-spacing:-0.153px;">Monday</span>
<span class="t" style="left:931.00px;top:509.50px;font-size:9px;font-weight:400;color:#a3adbf;letter-spacing:0.328px;">05:33AM</span>
<span class="t" style="left:241.49px;top:555.50px;font-size:9px;font-weight:400;color:#a3adbf;letter-spacing:0.003px;">54:45</span>
<span class="t" style="left:271.74px;top:540.75px;font-size:10.5px;font-weight:400;color:#4e5f81;letter-spacing:0.062px;-webkit-text-stroke:0.45px #4e5f81;">Username</span>
<span class="t" style="left:272.15px;top:555.50px;font-size:9px;font-weight:400;color:#4e5f81;letter-spacing:0.072px;">Sessions 12</span>
<span class="t" style="left:363.31px;top:540.50px;font-size:11px;font-weight:400;color:#4e5f81;letter-spacing:-0.152px;">5min ago</span>
<span class="t" style="left:363.17px;top:555.50px;font-size:9px;font-weight:400;color:#4e5f81;letter-spacing:0.142px;">16.12.2020</span>
<span class="t" style="left:412.70px;top:555.50px;font-size:9px;font-weight:400;color:#a3adbf;letter-spacing:0.228px;">05:33AM</span>
<span class="t" style="left:484.05px;top:540.50px;font-size:11px;font-weight:400;color:#4e5f81;letter-spacing:0.011px;">Liverpool</span>
<span class="t" style="left:484.21px;top:555.50px;font-size:9px;font-weight:400;color:#4e5f81;letter-spacing:0.064px;">England</span>
<span class="t" style="left:577.51px;top:540.50px;font-size:11px;font-weight:400;color:#4e5f81;letter-spacing:-0.146px;">12</span>
<span class="t" style="left:682.06px;top:540.50px;font-size:11px;font-weight:400;color:#4e5f81;letter-spacing:-0.392px;">SM-A217F</span>
<span class="t" style="left:756.61px;top:540.50px;font-size:11px;font-weight:400;color:#4e5f81;letter-spacing:-0.139px;">10.0.2</span>
<span class="t" style="left:838.57px;top:540.50px;font-size:11px;font-weight:400;color:#4e5f81;">0</span>
<span class="t" style="left:896.21px;top:540.50px;font-size:11px;font-weight:400;color:#4e5f81;letter-spacing:-0.056px;">16.12.2020</span>
<span class="t" style="left:896.31px;top:554.50px;font-size:9px;font-weight:400;color:#4e5f81;letter-spacing:-0.153px;">Monday</span>
<span class="t" style="left:931.00px;top:554.50px;font-size:9px;font-weight:400;color:#a3adbf;letter-spacing:0.328px;">05:33AM</span>
<span class="t" style="left:241.49px;top:600.50px;font-size:9px;font-weight:400;color:#a3adbf;letter-spacing:0.003px;">54:45</span>
<span class="t" style="left:271.74px;top:585.75px;font-size:10.5px;font-weight:400;color:#4e5f81;letter-spacing:0.062px;-webkit-text-stroke:0.45px #4e5f81;">Username</span>
<span class="t" style="left:272.15px;top:600.50px;font-size:9px;font-weight:400;color:#4e5f81;letter-spacing:0.072px;">Sessions 12</span>
<span class="t" style="left:363.31px;top:585.50px;font-size:11px;font-weight:400;color:#4e5f81;letter-spacing:-0.152px;">5min ago</span>
<span class="t" style="left:363.17px;top:601.50px;font-size:9px;font-weight:400;color:#4e5f81;letter-spacing:0.142px;">16.12.2020</span>
<span class="t" style="left:412.70px;top:601.50px;font-size:9px;font-weight:400;color:#a3adbf;letter-spacing:0.228px;">05:33AM</span>
<span class="t" style="left:484.05px;top:585.50px;font-size:11px;font-weight:400;color:#4e5f81;letter-spacing:0.011px;">Liverpool</span>
<span class="t" style="left:484.21px;top:600.50px;font-size:9px;font-weight:400;color:#4e5f81;letter-spacing:0.064px;">England</span>
<span class="t" style="left:577.51px;top:585.50px;font-size:11px;font-weight:400;color:#4e5f81;letter-spacing:-0.146px;">12</span>
<span class="t" style="left:682.06px;top:585.50px;font-size:11px;font-weight:400;color:#4e5f81;letter-spacing:-0.392px;">SM-A217F</span>
<span class="t" style="left:756.61px;top:585.50px;font-size:11px;font-weight:400;color:#4e5f81;letter-spacing:-0.139px;">10.0.2</span>
<span class="t" style="left:838.57px;top:585.50px;font-size:11px;font-weight:400;color:#4e5f81;">0</span>
<span class="t" style="left:896.21px;top:585.50px;font-size:11px;font-weight:400;color:#4e5f81;letter-spacing:-0.056px;">16.12.2020</span>
<span class="t" style="left:896.31px;top:599.50px;font-size:9px;font-weight:400;color:#4e5f81;letter-spacing:-0.153px;">Monday</span>
<span class="t" style="left:931.00px;top:599.50px;font-size:9px;font-weight:400;color:#a3adbf;letter-spacing:0.328px;">05:33AM</span>
<span class="t" style="left:241.49px;top:645.50px;font-size:9px;font-weight:400;color:#a3adbf;letter-spacing:0.003px;">54:45</span>
<span class="t" style="left:271.74px;top:630.75px;font-size:10.5px;font-weight:400;color:#4e5f81;letter-spacing:0.062px;-webkit-text-stroke:0.45px #4e5f81;">Username</span>
<span class="t" style="left:272.15px;top:645.50px;font-size:9px;font-weight:400;color:#4e5f81;letter-spacing:0.072px;">Sessions 12</span>
<span class="t" style="left:363.31px;top:630.50px;font-size:11px;font-weight:400;color:#4e5f81;letter-spacing:-0.152px;">5min ago</span>
<span class="t" style="left:363.17px;top:646.50px;font-size:9px;font-weight:400;color:#4e5f81;letter-spacing:0.142px;">16.12.2020</span>
<span class="t" style="left:412.70px;top:646.50px;font-size:9px;font-weight:400;color:#a3adbf;letter-spacing:0.228px;">05:33AM</span>
<span class="t" style="left:484.05px;top:630.50px;font-size:11px;font-weight:400;color:#4e5f81;letter-spacing:0.011px;">Liverpool</span>
<span class="t" style="left:484.21px;top:645.50px;font-size:9px;font-weight:400;color:#4e5f81;letter-spacing:0.064px;">England</span>
<span class="t" style="left:577.51px;top:630.50px;font-size:11px;font-weight:400;color:#4e5f81;letter-spacing:-0.146px;">12</span>
<span class="t" style="left:682.06px;top:630.50px;font-size:11px;font-weight:400;color:#4e5f81;letter-spacing:-0.392px;">SM-A217F</span>
<span class="t" style="left:756.61px;top:630.50px;font-size:11px;font-weight:400;color:#4e5f81;letter-spacing:-0.139px;">10.0.2</span>
<span class="t" style="left:838.57px;top:630.50px;font-size:11px;font-weight:400;color:#4e5f81;">0</span>
<span class="t" style="left:896.21px;top:630.50px;font-size:11px;font-weight:400;color:#4e5f81;letter-spacing:-0.056px;">16.12.2020</span>
<span class="t" style="left:896.31px;top:644.50px;font-size:9px;font-weight:400;color:#4e5f81;letter-spacing:-0.153px;">Monday</span>
<span class="t" style="left:931.00px;top:644.50px;font-size:9px;font-weight:400;color:#a3adbf;letter-spacing:0.328px;">05:33AM</span>
</div>
</div>
</div>
</body></html>
